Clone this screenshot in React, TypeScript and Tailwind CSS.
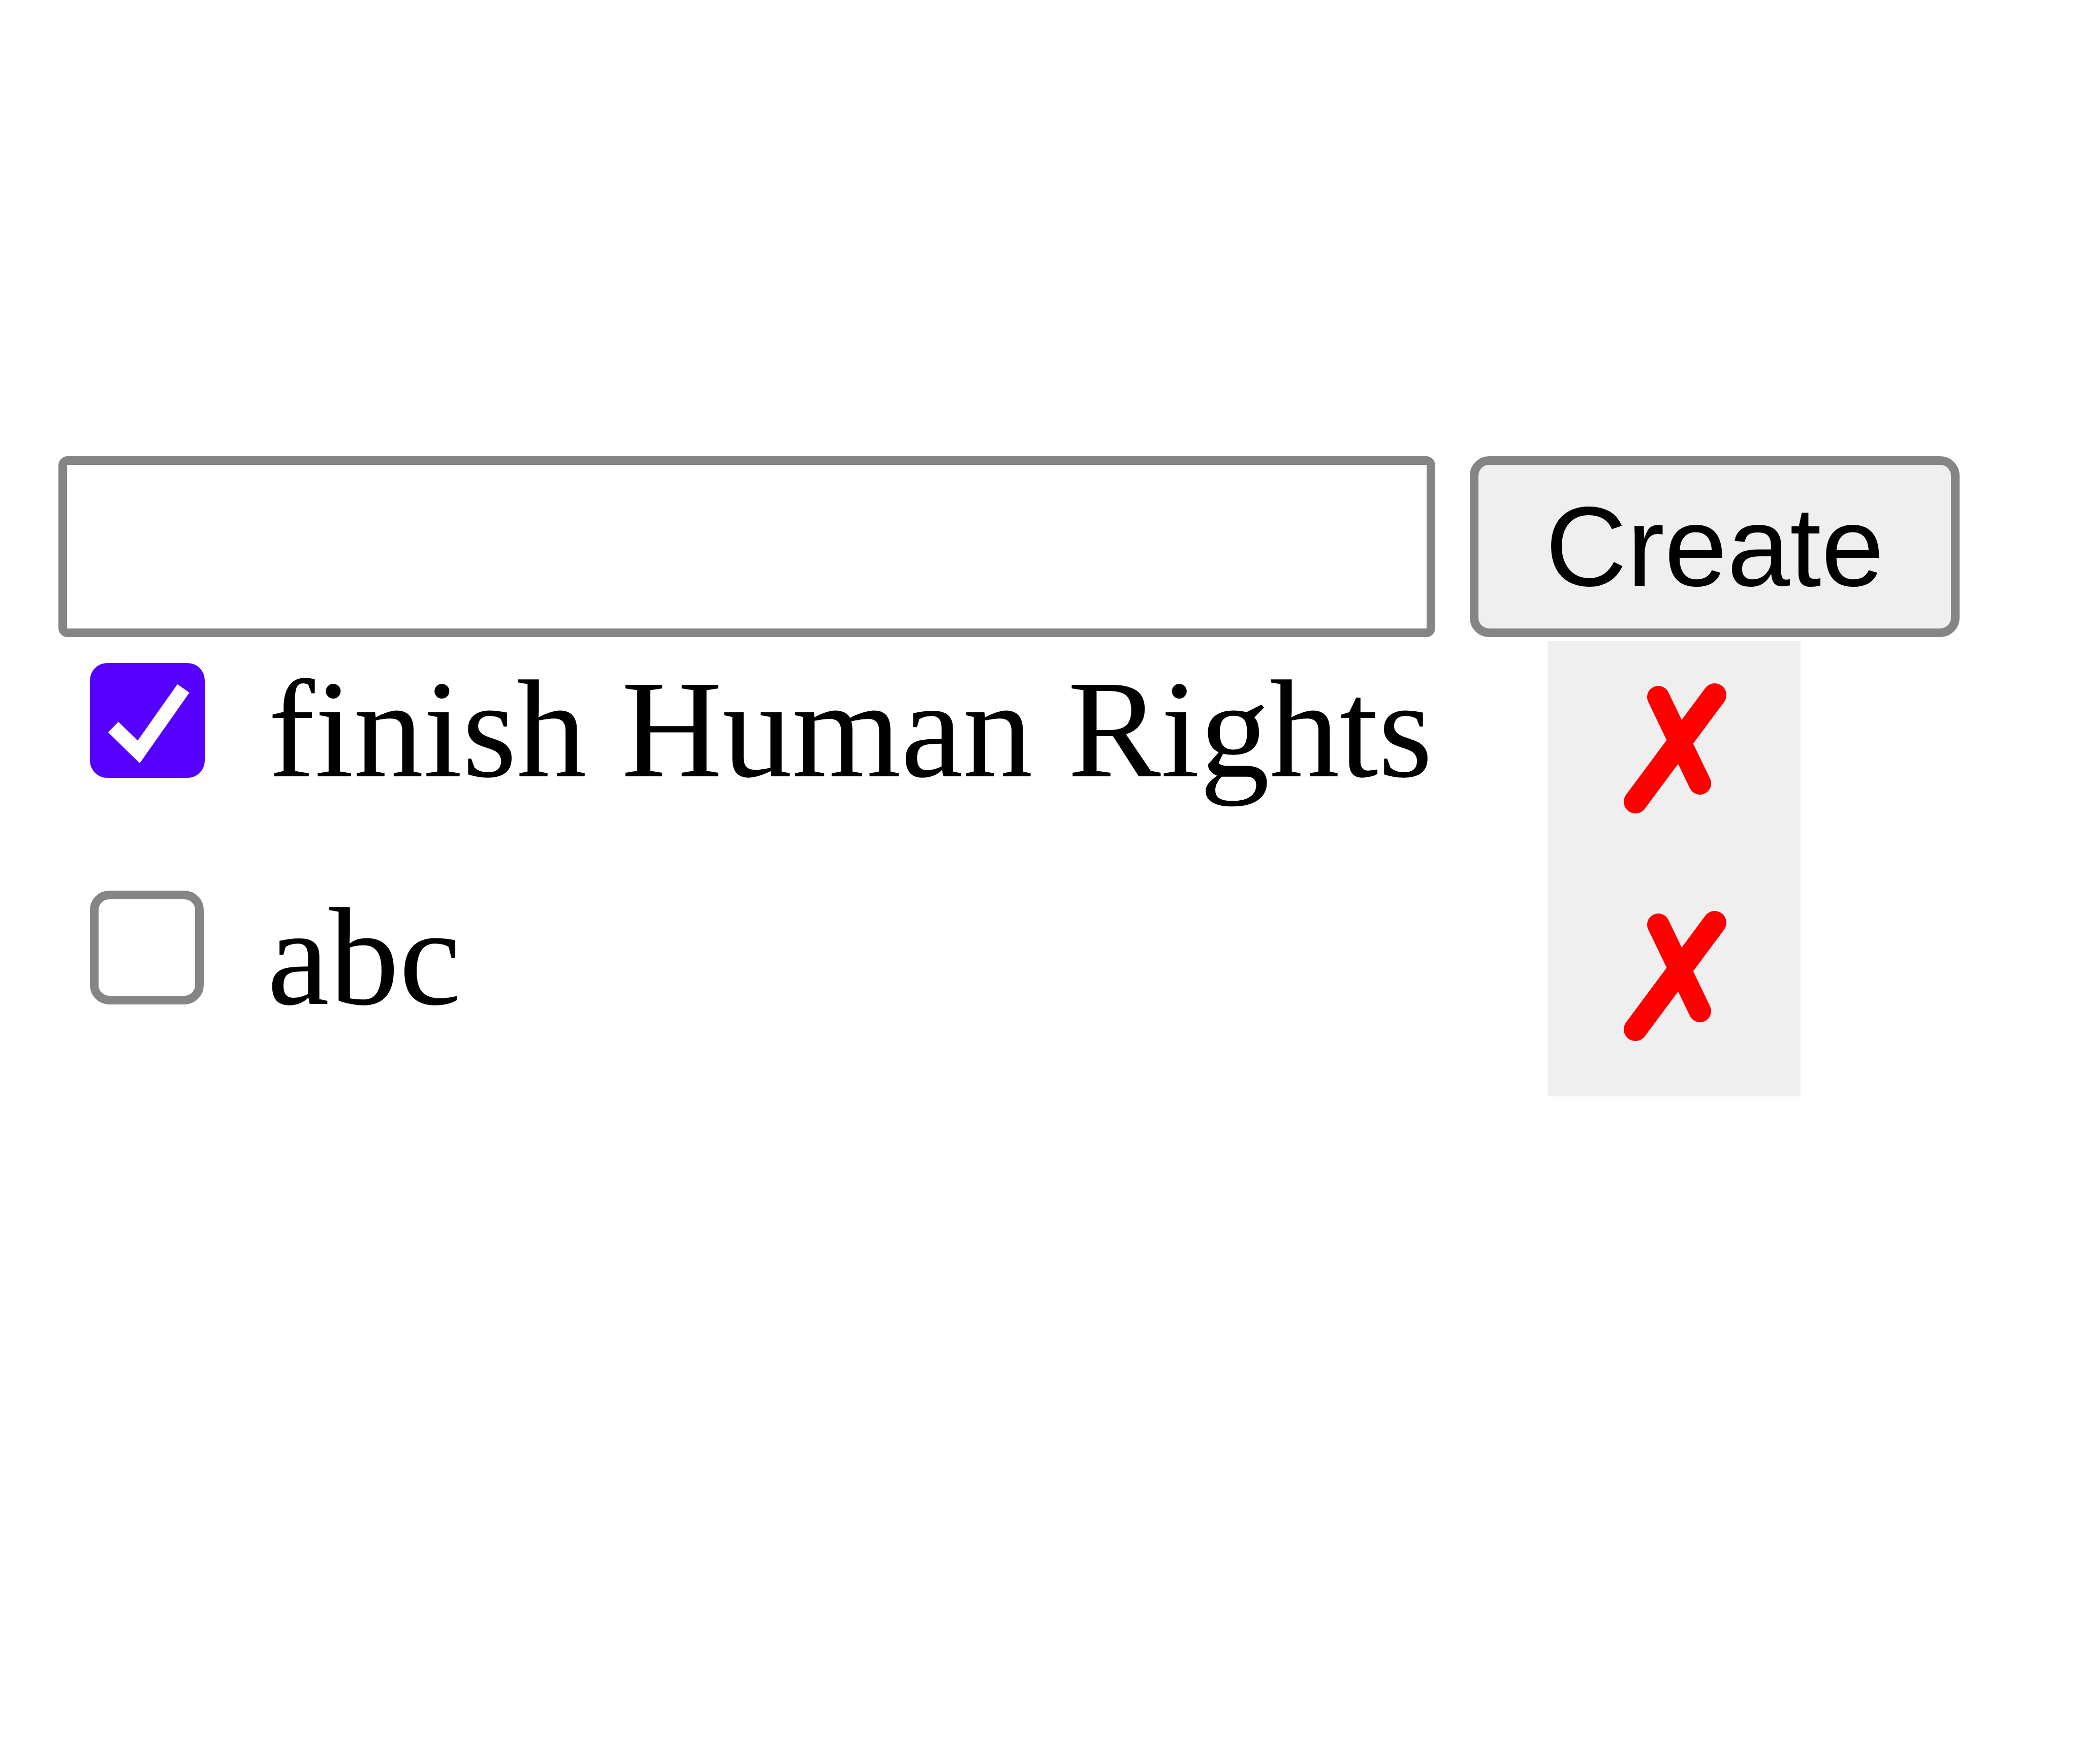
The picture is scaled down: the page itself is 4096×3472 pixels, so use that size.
import { useState } from 'react';

type Todo = { id: number; text: string; done: boolean };

const initialTodos: Todo[] = [
  { id: 1, text: 'finish Human Rights', done: true },
  { id: 2, text: 'abc', done: false },
];

function CheckBox({ checked, onToggle }: { checked: boolean; onToggle: () => void }) {
  if (checked) {
    return (
      <button
        onClick={onToggle}
        className="mt-[43px] ml-[62px] flex h-[226px] w-[226px] shrink-0 items-center justify-center rounded-[34px] bg-[#5500ff]"
      >
        <svg width="226" height="226" viewBox="0 0 226 226">
          <polyline
            points="46,126 96,175 184,50"
            fill="none"
            stroke="#ffffff"
            strokeWidth="29"
            strokeLinejoin="miter"
          />
        </svg>
      </button>
    );
  }
  return (
    <button
      onClick={onToggle}
      className="mt-[43px] ml-[62px] h-[224px] w-[224px] shrink-0 rounded-[38px] border-[17px] border-[#858585] bg-white"
    />
  );
}

function DeleteMark() {
  return (
    <svg width="206" height="259" viewBox="0 0 206 259">
      <line x1="25" y1="234" x2="181" y2="24" stroke="#ff0000" strokeWidth="46" strokeLinecap="round" />
      <line x1="70" y1="28" x2="152" y2="198" stroke="#ff0000" strokeWidth="44" strokeLinecap="round" />
    </svg>
  );
}

export default function App() {
  const [todos, setTodos] = useState<Todo[]>(initialTodos);
  const [draft, setDraft] = useState('');

  const create = () => {
    if (!draft.trim()) return;
    setTodos([...todos, { id: Date.now(), text: draft, done: false }]);
    setDraft('');
  };

  return (
    <div className="h-[3472px] w-[4096px] bg-white pt-[898px] pl-[115px] text-black">
      <div className="flex items-start gap-[68px]">
        <input
          value={draft}
          onChange={(e) => setDraft(e.target.value)}
          className="h-[356px] w-[2710px] rounded-[18px] border-[17px] border-[#858585] bg-white px-[30px] text-[222px] outline-none"
        />
        <button
          onClick={create}
          className="h-[356px] w-[964px] rounded-[38px] border-[17px] border-[#858585] bg-[#efefef] text-[222px] leading-none font-['Liberation_Sans',Arial,sans-serif]"
        >
          Create
        </button>
      </div>

      <ul className="mt-[8px]">
        {todos.map((todo) => (
          <li key={todo.id} className="flex h-[448px]">
            <div className="flex w-[2931px] items-start">
              <CheckBox
                checked={todo.done}
                onToggle={() =>
                  setTodos(todos.map((t) => (t.id === todo.id ? { ...t, done: !t.done } : t)))
                }
              />
              <span className="ml-[125px] whitespace-nowrap text-[275px] leading-[346px] font-['Liberation_Serif','Times_New_Roman',serif]">
                {todo.text}
              </span>
            </div>
            <button
              onClick={() => setTodos(todos.filter((t) => t.id !== todo.id))}
              className="flex w-[498px] items-start justify-center bg-[#efefef] pt-[82px] pl-[4px]"
            >
              <DeleteMark />
            </button>
          </li>
        ))}
      </ul>
    </div>
  );
}
